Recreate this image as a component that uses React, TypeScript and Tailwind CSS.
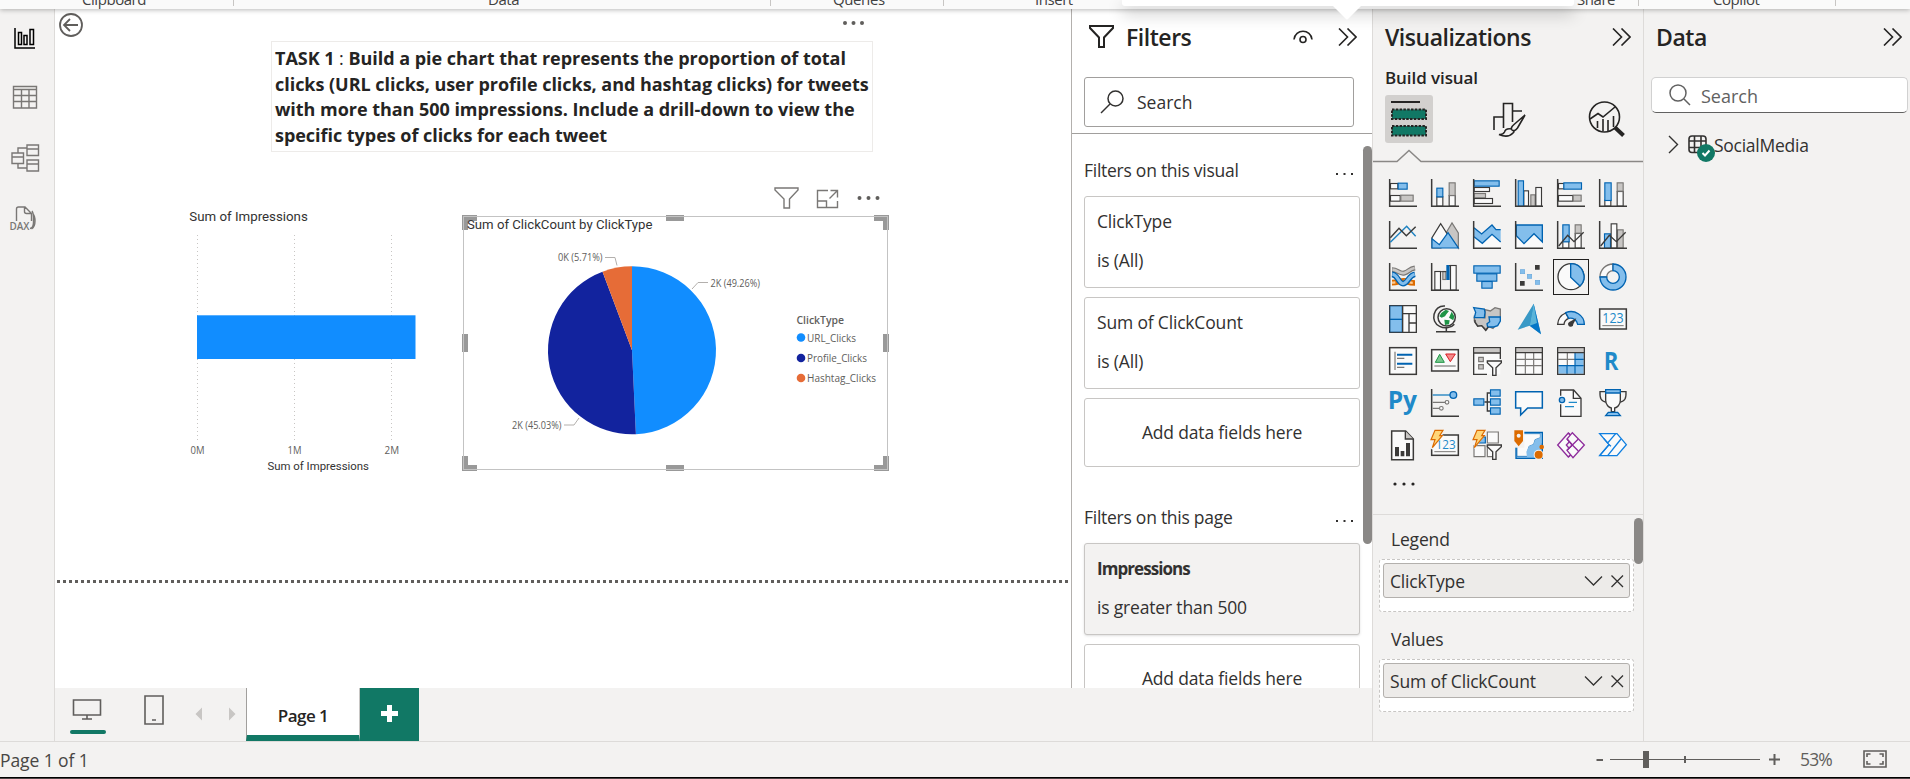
import type { ReactNode } from "react";

const DARK = "#3b3a39";
const BLUE = "#0063b1";
const LIGHT = "#83beec";
const GREY = "#797775";
const SILVER = "#c8c6c4";
const WHITE = "#fafafa";

type BoxProps = { x: number; y: number; w: number; h: number; tone?: "b" | "g" | "w" | "k" };

function Box({ x, y, w, h, tone = "w" }: BoxProps) {
  const fill = tone === "b" ? LIGHT : tone === "g" ? SILVER : WHITE;
  const stroke = tone === "b" ? BLUE : tone === "g" ? GREY : DARK;
  return <rect x={x + 1.5} y={y + 1.5} width={w - 3} height={h - 3} fill={fill} stroke={stroke} strokeWidth={3.4} />;
}

const Axis = () => <path d="M2 0V82H84" fill="none" stroke={DARK} strokeWidth={4.5} />;

function Funnel({ d = "M43 42h42v5L69 62v23H59V62L43 47z" }: { d?: string }) {
  return <path d={d} fill={WHITE} stroke={DARK} strokeWidth={4} />;
}

const Bolt = () => (
  <path d="M12-2H36L26 14H34L4 50L12 26H0Z" fill="#ffd679" stroke="#dc6b00" strokeWidth={3.5} />
);

const visuals: { name: string; art: ReactNode }[] = [
  { name: "Stacked bar chart", art: <><Box x={3} y={12} w={25} h={19} /><Box x={26} y={11} w={30} h={21} tone="b" /><Box x={3} y={48} w={32} h={20} /><Box x={34} y={47} w={40} h={21} tone="g" /><Axis /></> },
  { name: "Stacked column chart", art: <><Box x={16} y={52} w={21} h={31} /><Box x={16} y={26} w={21} h={29} tone="b" /><Box x={53} y={48} w={21} h={35} /><Box x={53} y={10} w={21} h={41} tone="g" /><Axis /></> },
  { name: "Clustered bar chart", art: <><Box x={2} y={24} w={49} h={15} /><Box x={2} y={4} w={78} h={19} tone="b" /><Box x={2} y={42} w={37} h={16} tone="g" /><Box x={2} y={57} w={58} h={18} /><Axis /></> },
  { name: "Clustered column chart", art: <><Box x={25} y={34} w={17} h={49} /><Box x={8} y={4} w={19} h={79} tone="b" /><Box x={46} y={46} w={16} h={37} tone="g" /><Box x={61} y={24} w={20} h={59} /><Axis /></> },
  { name: "100% stacked bar chart", art: <><Box x={3} y={12} w={20} h={19} /><Box x={19} y={10} w={56} h={22} tone="b" /><Box x={3} y={48} w={46} h={20} /><Box x={47} y={47} w={27} h={21} tone="g" /><Axis /></> },
  { name: "100% stacked column chart", art: <><Box x={16} y={62} w={21} h={21} /><Box x={16} y={10} w={22} h={56} tone="b" /><Box x={53} y={36} w={21} h={47} /><Box x={53} y={10} w={21} h={28} tone="g" /><Axis /></> },

  { name: "Line chart", art: <><Axis /><g fill="none" strokeWidth={4.4}><path d="M4 64L53 16L80 46" stroke="#1f82c0" /><path d="M4 50L30 22L52 44L80 17" stroke={DARK} /></g></> },
  { name: "Area chart", art: <g strokeWidth={3.6}><path d="M45 36L63 6L82 36V81Z" fill={SILVER} stroke={GREY} /><path d="M3 81V50L29 8L52 44L30 81Z" fill={WHITE} stroke={DARK} /><path d="M3 81V53L25 71L51 35L82 81Z" fill={LIGHT} stroke={BLUE} /></g> },
  { name: "Stacked area chart", art: <><path d="M3 20L26 39L57 12L69 26H83V63L57 40L28 67L3 47Z" fill={LIGHT} /><path d="M3 47L28 67L57 40L83 63V82H3Z" fill={WHITE} /><path d="M3 20L26 39L57 12L69 26H83M3 47L28 67L57 40L83 63" fill="none" stroke={BLUE} strokeWidth={4} /><Axis /></> },
  { name: "100% stacked area chart", art: <><path d="M3 44L27 68L57 38L82 63V82H3Z" fill={WHITE} /><path d="M4 12H82V63L57 38L27 68L4 44Z" fill={LIGHT} stroke={BLUE} strokeWidth={4} /><Axis /></> },
  { name: "Line and stacked column chart", art: <><Box x={16} y={60} w={21} h={23} /><Box x={16} y={10} w={22} h={54} tone="b" /><Box x={53} y={36} w={21} h={47} /><Box x={53} y={10} w={21} h={28} tone="g" /><Axis /><path d="M5 75L32 43L51 62L80 34" fill="none" stroke={DARK} strokeWidth={4} /></> },
  { name: "Line and clustered column chart", art: <><Box x={15} y={37} w={21} h={46} tone="b" /><Box x={54} y={25} w={20} h={58} tone="g" /><Box x={35} y={7} w={20} h={76} /><Axis /><path d="M5 75L31 43L52 62L80 34" fill="none" stroke={DARK} strokeWidth={4} /></> },

  { name: "Ribbon chart", art: <><g fill="none"><path d="M9 59C28 59 40 50 50 54S64 60 78 60" stroke="#dc6b00" strokeWidth={17} /><path d="M9 59C28 59 40 50 50 54S64 60 78 60" stroke="#ffc98f" strokeWidth={7} strokeDasharray="10 8" /><path d="M9 20C26 20 32 34 46 30S60 18 78 15" stroke={GREY} strokeWidth={15} /><path d="M10 20C26 20 32 34 46 30S60 18 77 15" stroke={SILVER} strokeWidth={8} /><path d="M9 34C28 36 28 62 42 62S58 38 78 34" stroke={BLUE} strokeWidth={17} /><path d="M10 34C28 36 28 62 42 62S58 38 77 34" stroke={LIGHT} strokeWidth={9} /></g><Axis /></> },
  { name: "Waterfall chart", art: <><Box x={10} y={24} w={20} h={59} /><Box x={34} y={24} w={12} h={27} tone="g" /><rect x={46} y={6} width={10} height={45} fill={BLUE} /><Box x={57} y={6} w={20} h={77} /><path d="M28 26H46M54 8H60" stroke={DARK} strokeWidth={3} /><Axis /></> },
  { name: "Funnel", art: <><Box x={1} y={7} w={82} h={25} tone="b" /><Box x={10} y={31} w={63} h={25} tone="b" /><Box x={25} y={54} w={34} h={23} tone="b" /></> },
  { name: "Scatter chart", art: <><Axis /><g fill={LIGHT} stroke="#6aa9dc" strokeWidth={2}><rect x={16} y={20} width={13} height={12} /><rect x={37} y={34} width={13} height={12} /><rect x={61} y={52} width={13} height={12} /></g><path d="M60 6h14v14H60zM15 54h14v14H15z" fill={DARK} /></> },
  { name: "Pie chart", art: <><circle cx={42} cy={41} r={39} fill={WHITE} stroke={DARK} strokeWidth={4} /><path d="M41 2A39 39 0 0 1 69 69L41 43Z" fill={LIGHT} stroke={BLUE} strokeWidth={4} /></> },
  { name: "Donut chart", art: <><path d="M42 3A39 39 0 0 0 3 42H23A19 19 0 0 1 42 23Z" fill={WHITE} stroke={GREY} strokeWidth={4} /><path d="M42 3A39 39 0 1 1 3 42H23A19 19 0 1 0 42 23Z" fill={LIGHT} stroke={BLUE} strokeWidth={4} /></> },

  { name: "Treemap", art: <><path d="M2 2H40V82H2Z" fill={LIGHT} stroke={BLUE} strokeWidth={4} /><path d="M2 43H40" stroke={BLUE} strokeWidth={4} /><path d="M41 2H82V82H41ZM41 26H82M60 26V82M60 54H82" fill={WHITE} stroke={DARK} strokeWidth={4} /><path d="M41 2H2V82H41" fill="none" stroke={DARK} strokeWidth={3} /></> },
  { name: "Map", art: <><circle cx={47} cy={37} r={26} fill={WHITE} stroke={DARK} strokeWidth={4.5} /><path d="M31 24L44 14L54 18L46 28L42 34L32 38L25 34ZM62 20L70 34L67 46L54 38ZM40 44L56 46L54 58L42 60Z" fill="#1f9446" /><path d="M42 3C6 0-4 52 26 64C42 72 62 68 70 58M46 68V80M15 80.500H74" fill="none" stroke={DARK} strokeWidth={4.5} /></> },
  { name: "Filled map", art: <><path d="M36 14L52 18L66 8L82 12V36L76 56L66 62L60 70L46 64L40 74L26 62L14 62L4 48V34L36 38Z" fill={SILVER} stroke={GREY} strokeWidth={4} /><path d="M2 8L34 12L36 22L34 38L4 38L8 22ZM48 36H82V48L74 62L62 66L44 66L42 56L50 50Z" fill={LIGHT} stroke={BLUE} strokeWidth={4} /><path d="M6 44V52L14 64L26 62L38 76L46 66" fill="none" stroke={DARK} strokeWidth={4} /></> },
  { name: "Azure map", art: <><path d="M56-4L8 74L44 62L78 88Z" fill="#3999c6" /><path d="M56-4L78 88L44 62Z" fill="#0072c6" opacity={0.9} /><path d="M56-4L44 62L66 54Z" fill="#5bb4d8" /></> },
  { name: "Gauge", art: <><path d="M2 58A40 40 0 0 1 26 24L35 40A22 22 0 0 0 21 58Z" fill={WHITE} stroke={DARK} strokeWidth={4} /><path d="M26 23A40 38 0 0 1 82 58H62A22 22 0 0 0 35 40Z" fill={LIGHT} stroke={BLUE} strokeWidth={4} /><path d="M58 40L49 57A8 8 0 1 1 38 50Z" fill={DARK} /></> },
  { name: "Card", art: <><rect x={2} y={12} width={80} height={60} fill={WHITE} stroke={DARK} strokeWidth={4.5} /><text x={10} y={55} fontSize={42} textLength={64} lengthAdjust="spacingAndGlyphs" letterSpacing={0} fill="#1f8ac9">123</text><path d="M10 62H74" stroke={GREY} strokeWidth={3} /></> },

  { name: "Multi-row card", art: <><rect x={2} y={2} width={80} height={80} fill={WHITE} stroke={DARK} strokeWidth={4.5} /><path d="M18 14V69M24 34H46M24 61H46" stroke={GREY} strokeWidth={3.5} /><path d="M24 23H70M24 50H70" stroke={BLUE} strokeWidth={6} /></> },
  { name: "KPI", art: <><rect x={2} y={8} width={80} height={64} fill={WHITE} stroke={DARK} strokeWidth={4.5} /><path d="M13 46L26 22L40 46Z" fill="#79c98f" stroke="#1f9446" strokeWidth={3} /><path d="M44 21H73L58 44Z" fill="#f58a8a" stroke="#d81f26" strokeWidth={3} /><path d="M10 57H74" stroke={GREY} strokeWidth={3.5} /></> },
  { name: "Slicer", art: <><rect x={2} y={2} width={80} height={80} fill={WHITE} /><path d="M5 4H80V17H5Z" fill={SILVER} /><path d="M42 82H2V2H82V36M2 18H82" fill="none" stroke={DARK} strokeWidth={4} /><path d="M17 31H31V44H17ZM17 53H31V66H17Z" fill={SILVER} stroke={GREY} strokeWidth={3.5} /><Funnel /></> },
  { name: "Table", art: <><rect x={2} y={2} width={80} height={80} fill={WHITE} /><path d="M4 4H80V16H4Z" fill={SILVER} /><path d="M4 37H80M4 56H80M31 18V80M56 18V80" stroke={GREY} strokeWidth={3.5} /><path d="M2 2H82V82H2ZM2 17H82" fill="none" stroke={DARK} strokeWidth={4} /></> },
  { name: "Matrix", art: <><rect x={2} y={2} width={80} height={80} fill={WHITE} /><path d="M4 4H80V16H4Z" fill={SILVER} /><path d="M4 37H80M31 18V80" stroke={GREY} strokeWidth={3.5} /><path d="M54 18H80V80H4V56H54Z" fill={LIGHT} /><path d="M54 18V80M54 37H80M4 56H80M30 56V80" stroke={BLUE} strokeWidth={3.5} /><path d="M2 2H82V82H2ZM2 17H82" fill="none" stroke={DARK} strokeWidth={4} /></> },
  { name: "R script visual", art: <text x={14} y={69} fontSize={75} fontWeight={700} textLength={44} lengthAdjust="spacingAndGlyphs" letterSpacing={0} fill="#1f8ac9">R</text> },

  { name: "Python visual", art: <text x={-4} y={61} fontSize={75} fontWeight={700} textLength={88} lengthAdjust="spacingAndGlyphs" letterSpacing={0} fill="#1f8ac9">Py</text> },
  { name: "Key influencers", art: <><Axis /><path d="M5 40H43M5 58H25" stroke={GREY} strokeWidth={4} /><circle cx={48} cy={40} r={5.5} fill={WHITE} stroke={GREY} strokeWidth={3.5} /><circle cx={31} cy={58} r={5.5} fill={WHITE} stroke={GREY} strokeWidth={3.5} /><path d="M5 18H60" stroke="#1f82c0" strokeWidth={4} /><circle cx={67} cy={18} r={10} fill={LIGHT} stroke={BLUE} strokeWidth={4} /></> },
  { name: "Decomposition tree", art: <><path d="M34 39H52M52 12H43V66H52" fill="none" stroke={DARK} strokeWidth={4} /><Box x={1} y={28} w={33} h={22} tone="b" /><Box x={51} y={1} w={32} h={22} tone="b" /><Box x={51} y={28} w={32} h={22} tone="b" /><Box x={51} y={55} w={32} h={22} tone="b" /></> },
  { name: "Q&A", art: <path d="M2 8H82V57H38L17 78V57H2Z" fill={WHITE} stroke={BLUE} strokeWidth={4.5} /> },
  { name: "Narrative", art: <><path d="M11 20V3H50L72 28V82H11V46" fill={WHITE} stroke={DARK} strokeWidth={4} /><path d="M49 3V28H72" fill="none" stroke={DARK} strokeWidth={4} /><path d="M35 40H60M24 53H51" stroke="#1f8ac9" strokeWidth={3.5} /><circle cx={15} cy={33} r={8} fill={LIGHT} stroke={BLUE} strokeWidth={4} /></> },
  { name: "Metrics", art: <><path d="M20 8H3C2 28 6 38 24 40M64 8H81C82 28 78 38 60 40" fill="none" stroke={DARK} strokeWidth={4} /><path d="M20 10H64V34C64 48 54 56 47 57V68H37V57C30 56 20 48 20 34Z" fill={WHITE} stroke={DARK} strokeWidth={4} /><path d="M20 2H64V12H20ZM28 70H56L64 80H20Z" fill={LIGHT} stroke={BLUE} strokeWidth={4} /></> },

  { name: "Paginated report", art: <><path d="M8 0H50L73 24V86H8Z" fill={WHITE} stroke={DARK} strokeWidth={4.5} /><path d="M49 0V24H73" fill={SILVER} stroke={DARK} strokeWidth={4} /><path d="M18 48H30V76H18ZM35 60H46V76H35ZM51 36H63V76H51Z" fill={DARK} /></> },
  { name: "New card", art: <><rect x={2} y={12} width={80} height={61} fill={WHITE} stroke={DARK} strokeWidth={4.5} /><text x={14} y={55} fontSize={40} textLength={60} lengthAdjust="spacingAndGlyphs" letterSpacing={0} fill="#1f8ac9">123</text><path d="M10 62H74" stroke={GREY} strokeWidth={3} /><path d="M10-4H42L34 12H38L4 56L-4 50V10Z" fill="#f3f2f1" /><Bolt /></> },
  { name: "New slicer", art: <><path d="M43 3H76V36H43ZM3 44H36V77H3ZM43 44H60V77H43Z" fill={WHITE} stroke={GREY} strokeWidth={3.5} /><path d="M18 18H37V36H8Z" fill={LIGHT} stroke={BLUE} strokeWidth={3.5} /><path d="M38-4L28 12H36L4 54L0 26Z" fill="#f3f2f1" /><Bolt /><Funnel /></> },
  { name: "ArcGIS map", art: <><path d="M3 4H82V82H3Z" fill={LIGHT} stroke={BLUE} strokeWidth={4} /><path d="M6 8H76V20L60 26L56 40L42 46L38 60L40 76H6Z" fill={WHITE} stroke={BLUE} strokeWidth={2} /><path d="M76 8V20L60 26L56 40L42 46L34 62L36 78H50L54 56L70 44L80 36V8Z" fill={LIGHT} /><path d="M-3-4H28V50H-3Z" fill="#f3f2f1" /><path d="M-2-2H24V30L11 46L-2 30Z" fill="#dc6b00" /><circle cx={11} cy={14} r={6} fill="#f3f2f1" /><circle cx={80} cy={48} r={7} fill="#dc6b00" /><circle cx={71} cy={71} r={15} fill="#f3f2f1" /><circle cx={71} cy={71} r={12} fill="#dc6b00" /></> },
  { name: "Power Apps", art: <g fill={WHITE} stroke="#8e2d9c" strokeWidth={4}><path d="M34 6L2 42L34 78L48 66L28 42L48 20Z" /><path d="M46 5L82 42L48 80L30 58L46 42L30 24Z" /><path d="M30 24L46 42L64 24M30 58L46 42L64 60M34 6L40 12M34 78L40 72" fill="none" /></g> },
  { name: "Power Automate", art: <g fill={WHITE} stroke="#0f7fe0" strokeWidth={4}><path d="M2 8H54L82 41L54 74H2L30 41Z" /><path d="M14 22L26 36L50 8M26 74L66 24M2 74L30 41L36 46" fill="none" /></g> },
];

function VisualIcon({ name, art }: { name: string; art: ReactNode }) {
  const selected = name === "Pie chart";
  return (
    <li className={selected ? "-m-1 h-9 w-9 border border-[#201f1e] p-[3px]" : "h-7 w-7"}>
      <svg viewBox="0 0 84 84" className="block h-7 w-7 overflow-visible" role="img" aria-label={name}>{art}</svg>
    </li>
  );
}

function DoubleChevron() {
  return (
    <svg viewBox="0 0 19 18" className="block h-[18px] w-[19px]" fill="none" stroke="#252423" strokeWidth={1.6}>
      <path d="M1 .5L9.500 9L1 17.500M9.500 .5L18 9L9.500 17.500" />
    </svg>
  );
}

function PaneTitle({ children }: { children: ReactNode }) {
  return <h2 className="text-[23px] leading-8 font-semibold tracking-[-0.02em] text-[#252423]">{children}</h2>;
}

function FilterCard({ name, condition, active }: { name: string; condition: string; active?: boolean }) {
  return (
    <div className={active
      ? "h-[92px] shrink-0 rounded-[3px] border border-[#c8c6c4] bg-[#f3f2f1] px-3 pt-3 shadow-sm"
      : "h-[92px] shrink-0 rounded-[3px] border border-[#c8c6c4] bg-white px-3 pt-3"}>
      <div className={active ? "h-[39px] pt-px text-[17px] leading-6 font-bold tracking-[-0.055em]" : "h-[39px] leading-6"}>{name}</div>
      <div className="leading-6">{condition}</div>
    </div>
  );
}

function FilterHeading({ children }: { children: ReactNode }) {
  return (
    <div className="flex h-6 shrink-0 items-center justify-between pr-[7px]">
      <span className="leading-6 tracking-[-0.015em]">{children}</span>
      <svg viewBox="0 0 17 4" className="mt-2 h-1 w-[17px]" fill="#323130"><path d="M0 1h2v2H0zM7.500 1h2v2h-2zM15 1h2v2h-2z" /></svg>
    </div>
  );
}

const DropCard = () => (
  <div className="flex h-[69px] shrink-0 items-center justify-center rounded-[3px] border border-[#c8c6c4] bg-white">Add data fields here</div>
);

function Well({ title, field }: { title: string; field: string }) {
  return (
    <div className="h-[100px]">
      <div className="ml-3 h-[32px] leading-6">{title}</div>
      <div className="h-[53px] w-[255px] rounded-[3px] border border-dashed border-[#c8c6c4] bg-white p-[3px]">
        <div className="flex h-[35px] items-center rounded-[3px] border border-[#b3b0ad] bg-[#edebe9] pl-[6px] pr-[5px]">
          <span className="flex-1 leading-6">{field}</span>
          <svg viewBox="0 0 40 14" className="h-[14px] w-10" fill="none" stroke="#323130" strokeWidth={1.3}>
            <path d="M1 2.500L9.500 11L18 2.500M27.500 1.500L39 13M39 1.500L27.500 13" />
          </svg>
        </div>
      </div>
    </div>
  );
}

const ribbonGroups = [
  { label: "Clipboard", box: "w-[234px] pl-[82px]" },
  { label: "Data", box: "w-[537px] pl-[254px]" },
  { label: "Queries", box: "w-[173px] pl-[62px]" },
  { label: "Insert", box: "w-[240px] pl-[91px]" },
  { label: "Share", box: "w-[455px] pl-[393px]" },
  { label: "Copilot", box: "w-[197px] pl-[74px]" },
];

function Ribbon() {
  return (
    <header className="relative z-20 h-[9px] shrink-0 bg-[#fafafa] shadow-[0_1px_5px_rgba(0,0,0,0.28)]">
      <div className="flex h-[9px] items-end overflow-hidden">
        {ribbonGroups.map((g) => (
          <div key={g.label} className={`${g.box} h-[9px] shrink-0`}>
            <div className="-mt-[13px] text-[15px] leading-6 tracking-[-0.03em] text-[#424242]">{g.label}</div>
          </div>
        ))}
      </div>
      <svg viewBox="0 0 1910 6" className="absolute top-0 left-0 h-[6px] w-[1910px]" fill="none" stroke="#c8c6c4">
        <path d="M233.500 0V6M770.500 0V6M943.500 0V6M1638.500 0V6M1835.500 0V6" />
      </svg>
      <div className="absolute top-0 left-[1122px] h-[6px] w-[452px] rounded-b-[3px] bg-white shadow-[0_7px_16px_rgba(0,0,0,0.3)]" />
      <svg viewBox="0 0 30 15" className="absolute top-[5px] left-[1332px] h-[15px] w-[30px]"><path d="M0 0H30L16 14Q15 15 14 14Z" fill="#fff" /></svg>
    </header>
  );
}

function ViewRail() {
  return (
    <nav className="flex w-[55px] shrink-0 flex-col border-r border-[#dddbd9] bg-[#f3f2f1]">
      <svg viewBox="0 9 54 230" className="h-[230px] w-[54px]" fill="none" stroke="#797775" strokeWidth={1.4}>
        <path d="M15 28V48H35M18.500 32.500H21.500V44.500H18.500ZM24 35.500H27V44.500H24ZM30 29.500H33.500V44.500H30Z" stroke="#000" strokeWidth={1.5} />
        <path d="M13.500 86.500H36.500V108H13.500ZM13.500 89.500H36.500M13.500 95.500H36.500M13.500 101.500H36.500M21.500 90V108M29 90V108" />
        <path d="M27 145H38.500V155.500H27ZM27 149H38.500M27 160H38.500V171H27ZM27 164H38.500M12 153H23.500V163.500H12ZM12 157H23.500M18 153V148H27M18 163.500V168H27" />
        <path d="M16.500 221V209Q16.500 207 18.500 207H25L31.500 213.500V221M24.500 207V211.500Q24.500 213.500 26.500 213.500H31.500M32 211Q33.500 213 33.500 217V222Q33.500 228 30 228.500M33 214Q35 216 35 221Q35 227 31.500 229" />
        <text x={9.5} y={229.5} fontSize={10} fontWeight={600} textLength={20} lengthAdjust="spacingAndGlyphs" letterSpacing={0} stroke="none" fill="#797775">DAX</text>
      </svg>
    </nav>
  );
}

const dinFont = "Roboto, sans-serif";

function BarChart() {
  return (
    <svg viewBox="185 205 240 275" className="absolute top-[196px] left-[130px] h-[275px] w-[240px]" letterSpacing={0}>
      <g fontFamily={dinFont} fill="#333">
        <text x={189.3} y={221} fontSize={13} textLength={118.5} lengthAdjust="spacingAndGlyphs">Sum of Impressions</text>
        <text x={267.5} y={470} fontSize={11.5} textLength={101.5} lengthAdjust="spacingAndGlyphs">Sum of Impressions</text>
      </g>
      <path d="M197.500 235V443M294.500 235V443M391.500 235V443" stroke="#c8c6c4" strokeDasharray="1 3" />
      <rect x={197} y={315.3} width={218.5} height={43.7} fill="#118dff" />
      <g fontSize={10} fill="#605e5c">
        <text x={190.5} y={454} textLength={14} lengthAdjust="spacingAndGlyphs">0M</text>
        <text x={287.5} y={454} textLength={14} lengthAdjust="spacingAndGlyphs">1M</text>
        <text x={384.5} y={454} textLength={14.5} lengthAdjust="spacingAndGlyphs">2M</text>
      </g>
    </svg>
  );
}

const slices = [
  { label: "URL_Clicks", share: 0.4926, color: "#118dff", y: 337.5, len: 49 },
  { label: "Profile_Clicks", share: 0.4503, color: "#12239e", y: 358, len: 60 },
  { label: "Hashtag_Clicks", share: 0.0571, color: "#e66c37", y: 378, len: 69 },
];

function slicePath(from: number, to: number) {
  const pt = (t: number) => `${632 + 84 * Math.sin(t * 2 * Math.PI)} ${350.3 - 84 * Math.cos(t * 2 * Math.PI)}`;
  return `M632 350.3L${pt(from)}A84 84 0 ${to - from > 0.5 ? 1 : 0} 1 ${pt(to)}Z`;
}

function PieChart() {
  let start = 0;
  return (
    <svg viewBox="460 180 432 294" className="absolute top-[171px] left-[405px] h-[294px] w-[432px]" letterSpacing={0}>
      <path d="M462 215H477V221H468V230H462ZM666 215H684V221H666ZM874 215H889V230H883V221H874ZM462 334H468V352H462ZM883 334H889V352H883ZM462 456H468V465H477V471H462ZM666 465H684V471H666ZM889 456V471H874V465H883V456Z" fill="#999" />
      <rect x={463.5} y={216.5} width={424} height={253} fill="none" stroke="#c3c3c3" />
      <text x={467} y={229} fontSize={13} textLength={185.5} lengthAdjust="spacingAndGlyphs" fontFamily={dinFont} fill="#333">Sum of ClickCount by ClickType</text>
      {slices.map((s) => {
        const from = start;
        start += s.share;
        return <path key={s.label} d={slicePath(from, start)} fill={s.color} />;
      })}
      <path d="M605 257.500H615L617 265.500M708 282.500H698L692 289M564 425H574L579 418" fill="none" stroke="#b3b0ad" />
      <g fontSize={10.3} fill="#605e5c">
        <text x={558} y={261} textLength={44.5} lengthAdjust="spacingAndGlyphs">0K (5.71%)</text>
        <text x={710.5} y={287} textLength={49.5} lengthAdjust="spacingAndGlyphs">2K (49.26%)</text>
        <text x={512} y={429} textLength={49.5} lengthAdjust="spacingAndGlyphs">2K (45.03%)</text>
      </g>
      <g fill="#605e5c">
        <text x={796.5} y={324} fontSize={11.5} fontWeight={600} textLength={47.5} lengthAdjust="spacingAndGlyphs">ClickType</text>
        {slices.map((s) => (
          <g key={s.label}>
            <circle cx={801} cy={s.y} r={4.3} fill={s.color} />
            <text x={807} y={s.y + 4} fontSize={11.5} textLength={s.len} lengthAdjust="spacingAndGlyphs">{s.label}</text>
          </g>
        ))}
      </g>
      <g fill="none" stroke="#797775" strokeWidth={1.4}>
        <path d="M775 188H798V190L789.500 199V208H784V199L775 190Z" />
        <path d="M828 190.500H817.500V207.500H837.500V201M817.500 201H826.500V207.500M830.500 190.500H837.500V197.500M837 191L829.500 198.500" />
      </g>
      <path d="M857.500 198a2 2 0 1 0 4 0a2 2 0 1 0-4 0M866.500 198a2 2 0 1 0 4 0a2 2 0 1 0-4 0M875.500 198a2 2 0 1 0 4 0a2 2 0 1 0-4 0" fill="#605e5c" />
    </svg>
  );
}

function Canvas() {
  return (
    <main className="relative w-[1016px] shrink-0 overflow-hidden bg-white">
      <svg viewBox="0 0 24 24" className="absolute top-1 left-1 h-6 w-6" fill="none" stroke="#605e5c" strokeWidth={1.8}>
        <circle cx={12} cy={12} r={11} /><path d="M19 12H5.500M11 6L5 12L11 18" />
      </svg>
      <svg viewBox="0 0 24 6" className="absolute top-[11px] left-[786px] h-[6px] w-6" fill="#605e5c">
        <circle cx={4} cy={3} r={2} /><circle cx={12.5} cy={3} r={2} /><circle cx={21} cy={3} r={2} />
      </svg>
      <div className="absolute top-[32px] left-[216px] h-[111px] w-[602px] border border-[#edebe9] pt-1 pl-[3px] text-[18px] leading-[25.6px] font-bold tracking-[-0.002em] whitespace-nowrap text-[#252423]">
        <div>TASK 1<span className="font-normal"> : </span>Build a pie chart that represents the proportion of total</div>
        <div>clicks (URL clicks, user profile clicks, and hashtag clicks) for tweets</div>
        <div>with more than 500 impressions. Include a drill-down to view the</div>
        <div>specific types of clicks for each tweet</div>
      </div>
      <BarChart />
      <PieChart />
      <svg viewBox="0 0 1014 3" className="absolute top-[571px] left-[2px] h-[3px] w-[1014px]"><path d="M0 1.500H1014" stroke="#605e5c" strokeWidth={3} strokeDasharray="3 3" /></svg>
    </main>
  );
}

function FiltersPane() {
  return (
    <aside className="flex w-[301px] shrink-0 flex-col border-l border-[#b3b0ad] bg-white text-[#323130]">
      <div className="flex h-[125px] shrink-0 flex-col border-b border-[#a19f9d] pl-3">
        <div className="flex h-[59px] items-center pr-[15px] pb-1 pl-[5px]">
          <svg viewBox="0 0 25 23" className="h-[23px] w-[25px]" fill="none" stroke="#252423" strokeWidth={2}><path d="M1 1H24V3L15 12.500V22H10V12.500L1 3Z" /></svg>
          <div className="ml-3 flex-1"><PaneTitle>Filters</PaneTitle></div>
          <svg viewBox="0 0 20 14" className="mr-[25px] h-[14px] w-5" fill="none" stroke="#252423" strokeWidth={1.6}><path d="M1 9.500C2-1.500 18-1.500 19 9.500" /><circle cx={10} cy={9.5} r={3} /></svg>
          <DoubleChevron />
        </div>
        <div className="mt-[9px] flex h-[50px] w-[270px] shrink-0 items-center rounded-[3px] border border-[#a19f9d] pl-[15px]">
          <svg viewBox="0 0 24 24" className="h-6 w-6" fill="none" stroke="#323130" strokeWidth={1.5}><circle cx={15.5} cy={8.5} r={7.5} /><path d="M10 14L1 23" /></svg>
          <span className="mt-px ml-[13px] tracking-normal">Search</span>
        </div>
      </div>
      <div className="flex min-h-0 flex-1 overflow-hidden">
        <div className="flex w-[289px] flex-col pt-[24px] pr-px pl-3">
          <FilterHeading>Filters on this visual</FilterHeading>
          <div className="mt-[14px] flex flex-col gap-[9px]">
            <FilterCard name="ClickType" condition="is (All)" />
            <FilterCard name="Sum of ClickCount" condition="is (All)" />
            <DropCard />
          </div>
          <div className="mt-[38px]"><FilterHeading>Filters on this page</FilterHeading></div>
          <div className="mt-[14px] flex flex-col gap-[9px]">
            <FilterCard name="Impressions" condition="is greater than 500" active />
            <DropCard />
          </div>
        </div>
        <div className="mt-3 ml-[2px] h-[398px] w-[9px] rounded-full bg-[#8a8886]" />
      </div>
    </aside>
  );
}

function PageTabs() {
  return (
    <div className="flex h-[53px] shrink-0 bg-[#f3f2f1]">
      <svg viewBox="55 688 191 53" className="h-[53px] w-[191px] shrink-0" fill="none" stroke="#605e5c" strokeWidth={1.6}>
        <path d="M73.500 700H100.500V715H73.500ZM87 715V718.500M82 719H92M145 696H163V724H145ZM152 720H156" />
        <path d="M72 732H104" stroke="#117865" strokeWidth={4} strokeLinecap="round" />
        <path d="M202 707.500V720.500L195.500 714ZM229 707.500V720.500L235.500 714Z" fill="#c8c6c4" stroke="none" />
      </svg>
      <div className="flex w-[114px] shrink-0 items-center justify-center border-r border-b-[6px] border-l border-r-[#c8c6c4] border-b-[#117865] border-l-[#a19f9d] bg-white pt-2 text-[17px] font-semibold tracking-[-0.03em] text-[#252423]">Page 1</div>
      <div className="flex w-[59px] shrink-0 items-center justify-center bg-[#117865]">
        <svg viewBox="0 0 17 17" className="mb-[2px] h-[17px] w-[17px]" stroke="#fff" strokeWidth={5}><path d="M8.500 0V17M0 8.500H17" /></svg>
      </div>
    </div>
  );
}

function VisualizationsPane() {
  return (
    <aside className="flex w-[271px] shrink-0 flex-col border-l border-[#dddbd9] bg-[#f3f2f1] text-[#323130]">
      <div className="flex h-[55px] shrink-0 items-center pt-px pr-3 pl-3">
        <div className="flex-1"><PaneTitle>Visualizations</PaneTitle></div>
        <DoubleChevron />
      </div>
      <div className="h-[31px] shrink-0 pt-px pl-3 text-[17px] leading-[26px] font-semibold tracking-[-0.005em] text-[#252423]">Build visual</div>
      <svg viewBox="1373 95 270 68" className="h-[68px] w-[270px] shrink-0" fill="none" stroke="#252423" strokeWidth={1.6}>
        <rect x={1385} y={95} width={48} height={48} rx={3} fill="#d2d0ce" stroke="none" />
        <path d="M1391 102H1420" strokeWidth={2} />
        <path d="M1392 109.500H1426V119H1392ZM1392 126H1426V135.500H1392Z" fill="#117865" strokeWidth={2} strokeDasharray="2.500 1.300" />
        <path d="M1494 130V117H1503.500M1503.500 128V103.500H1512.500V122M1512.500 111H1522" />
        <path d="M1525 115L1514 124.500Q1510 128 1512 130Q1514.500 132 1517.500 128L1525 115ZM1511.500 129Q1505.500 128 1504.500 132Q1503 135 1499 134.500Q1508 138.500 1513 133Q1514.500 131.500 1513.500 130.500" />
        <circle cx={1604.5} cy={117} r={15} />
        <path d="M1590 119L1598 113.500L1603 117L1615 107M1597.500 121V128M1603 119V131M1608 120V131M1613.500 116V127" />
        <path d="M1615 127.500L1623.500 135.500" strokeWidth={4} />
        <path d="M1373 161.500H1397L1409 150.500L1421 161.500H1643" stroke="#8a8886" strokeWidth={1.5} />
      </svg>
      <ul className="mt-4 ml-4 grid shrink-0 grid-cols-[repeat(6,28px)] grid-rows-[repeat(7,28px)] gap-[14px]">
        {visuals.map((v) => <VisualIcon key={v.name} {...v} />)}
      </ul>
      <svg viewBox="0 0 22 4" className="mt-[23px] ml-[20px] h-1 w-[22px] shrink-0" fill="#252423"><circle cx={2} cy={2} r={1.6} /><circle cx={11} cy={2} r={1.6} /><circle cx={20} cy={2} r={1.6} /></svg>
      <div className="mt-[28px] flex flex-1 border-t border-[#dddbd9]">
        <div className="w-[261px] pt-3 pl-[6px]">
          <Well title="Legend" field="ClickType" />
          <Well title="Values" field="Sum of ClickCount" />
        </div>
        <div className="mt-[3px] h-[46px] w-[9px] rounded-full bg-[#8a8886]" />
      </div>
    </aside>
  );
}

function DataPane() {
  return (
    <aside className="flex w-[267px] shrink-0 flex-col border-l border-[#dddbd9] bg-[#f3f2f1] text-[#323130]">
      <div className="flex h-[55px] shrink-0 items-center pt-px pr-2 pl-3">
        <div className="flex-1"><PaneTitle>Data</PaneTitle></div>
        <DoubleChevron />
      </div>
      <div className="mt-[13px] ml-[7px] flex h-[36px] w-[257px] items-center rounded-[5px] border border-[#d1d1d1] border-b-[#616161] bg-white pl-[17px] text-[#616161]">
        <svg viewBox="0 0 22 22" className="h-[22px] w-[22px]" fill="none" stroke="#616161" strokeWidth={1.5}><circle cx={9} cy={9} r={8} /><path d="M15 15L21 21" /></svg>
        <span className="mt-[2px] ml-[10px] text-[18px] tracking-normal">Search</span>
      </div>
      <div className="mt-[20px] ml-[23px] flex items-center">
        <svg viewBox="1667 134 50 30" className="h-[30px] w-[50px]" fill="none" stroke="#323130" strokeWidth={1.4}>
          <path d="M1669 137L1677.500 145.500L1669 154" />
          <g strokeWidth={1.6}><rect x={1689} y={137} width={17} height={16.5} rx={3} /><path d="M1694.500 137V153.500M1701 137V153.500M1689 142H1706M1689 148.500H1706" /></g>
          <circle cx={1706} cy={154} r={9} fill="#117865" stroke="none" />
          <path d="M1702.500 154L1705 156.500L1709.500 151.500" stroke="#fff" strokeWidth={2} />
        </svg>
        <span className="-mt-[6px] -ml-[3px] tracking-[-0.015em]">SocialMedia</span>
      </div>
    </aside>
  );
}

function StatusBar() {
  return (
    <footer className="flex h-[38px] shrink-0 flex-col border-t border-[#dddbd9] bg-[#f3f2f1] text-[#484644]">
      <div className="flex h-[34px] items-center">
        <span className="w-[1596px] pt-px leading-6 tracking-[-0.005em]">Page 1 of 1</span>
        <svg viewBox="1596 742 190 34" className="h-[34px] w-[190px]" fill="none" stroke="#605e5c">
          <path d="M1610 759.500H1760" />
          <path d="M1596.500 760H1603M1769 759.500H1780M1774.500 754V765M1685 756V763" strokeWidth={2} />
          <path d="M1646 751V768" strokeWidth={6} />
        </svg>
        <span className="ml-[14px] w-[63px] leading-6 tracking-[-0.05em] text-[#605e5c]">53%</span>
        <svg viewBox="0 0 24 18" className="h-[18px] w-6" fill="none" stroke="#605e5c" strokeWidth={1.6}><path d="M1 1H23V17H1ZM7.500 4H4V7M16.500 4H20V7M4 11V14H7.500M20 11V14H16.500" /></svg>
      </div>
      <div className="mt-px h-[3px] border-t border-black bg-[#4a4445]" />
    </footer>
  );
}

export default function App() {
  return (
    <div className="flex h-[779px] w-[1910px] flex-col overflow-hidden bg-[#f3f2f1] font-['Open_Sans','Noto_Sans',sans-serif] text-[17.5px] tracking-[-0.01em] whitespace-nowrap">
      <Ribbon />
      <div className="flex h-[732px] shrink-0">
        <ViewRail />
        <div className="flex w-[1317px] shrink-0 flex-col">
          <div className="flex h-[679px] shrink-0">
            <Canvas />
            <FiltersPane />
          </div>
          <PageTabs />
        </div>
        <VisualizationsPane />
        <DataPane />
      </div>
      <StatusBar />
    </div>
  );
}
